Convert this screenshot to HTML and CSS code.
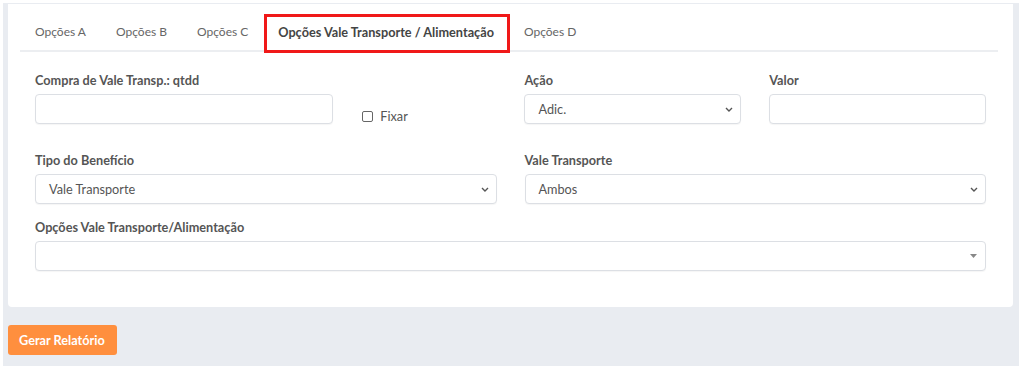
FILE: index.html
```html
<!DOCTYPE html>
<html lang="pt-BR">
<head>
<meta charset="utf-8">
<link rel="stylesheet" href="styles.css">
</head>
<body>
<div class="frame">
  <div class="card">
    <nav class="tabs">
      <span class="tab">Opções A</span>
      <span class="tab">Opções B</span>
      <span class="tab">Opções C</span>
      <span class="tab active">Opções Vale Transporte / Alimentação<span class="mark"></span></span>
      <span class="tab">Opções D</span>
    </nav>
    <div class="form">
      <div class="row row-first">
        <div class="col col-4">
          <label class="lbl">Compra de Vale Transp.: qtdd</label>
          <input class="ctrl" type="text">
        </div>
        <div class="col col-2 check-col">
          <span class="check"><span class="box"></span>Fixar</span>
        </div>
        <div class="col col-3">
          <label class="lbl">Ação</label>
          <div class="ctrl select"><span>Adic.</span>
            <svg class="chev" width="8" height="5" viewBox="0 0 8 5"><path d="M1 1 L4 4 L7 1" fill="none" stroke="#555" stroke-width="1.4"/></svg>
          </div>
        </div>
        <div class="col col-3">
          <label class="lbl">Valor</label>
          <input class="ctrl" type="text">
        </div>
      </div>
      <div class="row">
        <div class="col col-6">
          <label class="lbl">Tipo do Benefício</label>
          <div class="ctrl select"><span>Vale Transporte</span>
            <svg class="chev" width="8" height="5" viewBox="0 0 8 5"><path d="M1 1 L4 4 L7 1" fill="none" stroke="#555" stroke-width="1.4"/></svg>
          </div>
        </div>
        <div class="col col-6">
          <label class="lbl">Vale Transporte</label>
          <div class="ctrl select"><span>Ambos</span>
            <svg class="chev" width="8" height="5" viewBox="0 0 8 5"><path d="M1 1 L4 4 L7 1" fill="none" stroke="#555" stroke-width="1.4"/></svg>
          </div>
        </div>
      </div>
      <div class="row">
        <div class="col col-12">
          <label class="lbl">Opções Vale Transporte/Alimentação</label>
          <div class="ctrl select select2"><span></span>
            <svg class="tri" width="7" height="4" viewBox="0 0 7 4"><path d="M0 0 L7 0 L3.5 4 Z" fill="#888"/></svg>
          </div>
        </div>
      </div>
    </div>
  </div>
  <button class="btn" type="button">Gerar Relatório</button>
</div>
</body>
</html>
```
FILE: styles.css
```css
* { box-sizing: border-box; }
body {
  margin: 0;
  background: #fff;
  font-family: Lato, "Open Sans", sans-serif;
  font-size: 12.7px;
  color: #555;
}
.frame {
  margin: 3px 5px 0 3px;
  height: 363px;
  background: #e9ecf1;
  padding: 1px 6px 11px 5px;
}
.card {
  background: #fff;
  border-radius: 0 0 4px 4px;
  padding: 10px 13px 22px 13px;
}
.tabs {
  display: flex;
  margin: 0 2px 0 -1px;
  border-bottom: 2px solid #eceef1;
}
.tab {
  position: relative;
  height: 36px;
  line-height: 36px;
  padding: 0 15px;
  font-size: 12px;
  color: #666;
  white-space: nowrap;
}
.tab.active {
  font-size: 12.7px;
  color: #444;
  font-weight: 700;
}
.mark {
  position: absolute;
  left: 1px;
  right: -1px;
  top: 0;
  bottom: -3px;
  border: 3px solid #f01818;
}
.form { padding-top: 19px; }
.row { display: flex; margin-bottom: 14px; }
.row-first { margin-bottom: 25px; }
.col { padding: 0 14px; display: flex; flex-direction: column; }
.col-2 { width: 16.6667%; }
.col-3 { width: 25%; }
.col-4 { width: 33.3333%; }
.col-6 { width: 50%; }
.col-12 { width: 100%; }
.lbl {
  display: block;
  font-weight: 700;
  line-height: 18px;
  margin-bottom: 5px;
  color: #555;
}
.ctrl {
  height: 30px;
  width: 100%;
  border: 1px solid #dcdfe4;
  border-radius: 4px;
  background: #fff;
  box-shadow: 0 1px 1px rgba(0,0,0,0.04);
  font: inherit;
  color: #555;
  padding: 0 13px;
}
.select {
  display: flex;
  align-items: center;
  justify-content: space-between;
  padding-right: 7px;
}
.select2 { padding-right: 8px; }
.check-col { padding-top: 35px; }
.check {
  display: flex;
  align-items: center;
  height: 20px;
  color: #555;
}
.box {
  width: 11px;
  height: 11px;
  border: 1px solid #666;
  border-radius: 2px;
  margin: 0 7px 0 1px;
}
.btn {
  display: block;
  margin-top: 18px;
  height: 30px;
  padding: 0 12px 0 11px;
  border: none;
  border-radius: 3px;
  background: #ff8f3e;
  color: #fff;
  font: inherit;
  font-weight: 700;
}
```
